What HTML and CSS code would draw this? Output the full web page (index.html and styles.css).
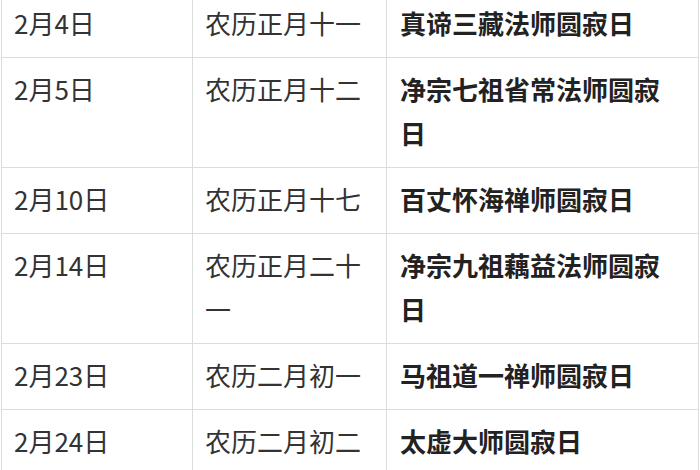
FILE: index.html
```html
<!DOCTYPE html>
<html lang="zh-CN">
<head>
<meta charset="utf-8">
<link rel="stylesheet" href="styles.css">
</head>
<body>
<table class="tbl">
  <colgroup>
    <col class="c1"><col class="c2"><col class="c3">
  </colgroup>
  <tr><td>2月4日</td><td>农历正月十一</td><td class="b">真谛三藏法师圆寂日</td></tr>
  <tr><td>2月5日</td><td>农历正月十二</td><td class="b">净宗七祖省常法师圆寂日</td></tr>
  <tr><td>2月10日</td><td>农历正月十七</td><td class="b">百丈怀海禅师圆寂日</td></tr>
  <tr><td>2月14日</td><td>农历正月二十一</td><td class="b">净宗九祖藕益法师圆寂日</td></tr>
  <tr><td>2月23日</td><td>农历二月初一</td><td class="b">马祖道一禅师圆寂日</td></tr>
  <tr><td>2月24日</td><td>农历二月初二</td><td class="b">太虚大师圆寂日</td></tr>
</table>
</body>
</html>
```
FILE: styles.css
```css
html, body {
  margin: 0;
  padding: 0;
  background: #fff;
  overflow: hidden;
}
body {
  font-family: "Noto Sans CJK SC", "Noto Sans", sans-serif;
  color: #333;
}
.tbl {
  border-collapse: collapse;
  table-layout: fixed;
  width: 697px;
  margin: -9px 0 0 1px;
}
.c1 { width: 191px; }
.c2 { width: 194px; }
.c3 { width: 312px; }
.tbl td {
  border: 1px solid #dcdcdc;
  font-size: 26px;
  line-height: 44px;
  padding: 9px 12px 12px 12px;
  vertical-align: top;
  word-break: break-all;
}
.tbl td:nth-child(3) {
  padding-left: 13px;
  padding-right: 20px;
}
.tbl td.b {
  font-weight: bold;
  color: #222;
}
```
